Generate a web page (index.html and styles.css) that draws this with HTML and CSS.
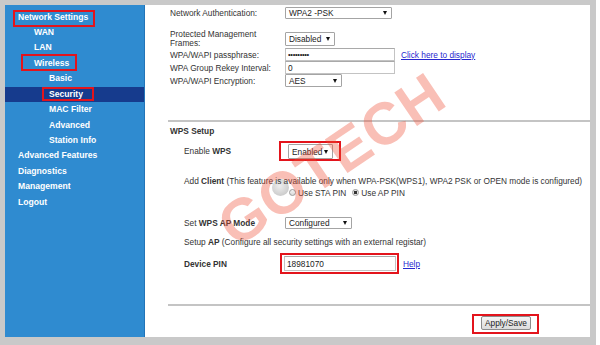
FILE: index.html
```html
<!DOCTYPE html>
<html lang="en">

<head>
    <meta charset="UTF-8">
    <meta name="viewport" content="width=device-width, initial-scale=1.0">
    <title>Wireless Security</title>
    <link rel="stylesheet" href="styles.css">
</head>

<body>
    <div class="frame">
        <nav class="sidebar">
            <div class="item lvl0"><span class="hl hl-net">Network Settings</span></div>
            <div class="item lvl1">WAN</div>
            <div class="item lvl1">LAN</div>
            <div class="item lvl1"><span class="hl hl-wl">Wireless</span></div>
            <div class="item lvl2">Basic</div>
            <div class="item lvl2 active"><span class="hl hl-sec">Security</span></div>
            <div class="item lvl2">MAC Filter</div>
            <div class="item lvl2">Advanced</div>
            <div class="item lvl2">Station Info</div>
            <div class="item lvl0">Advanced Features</div>
            <div class="item lvl0">Diagnostics</div>
            <div class="item lvl0">Management</div>
            <div class="item lvl0">Logout</div>
        </nav>

        <main class="content">
            <div class="row row-auth">
                <div class="label">Network Authentication:</div>
                <span class="select sel-auth">WPA2 -PSK<i class="caret"></i></span>
            </div>
            <div class="row row-pmf">
                <div class="label label-wrap">Protected Management Frames:</div>
                <span class="select sel-pmf">Disabled<i class="caret"></i></span>
            </div>
            <div class="row row-small">
                <div class="label">WPA/WAPI passphrase:</div>
                <span class="input inp-wide"><span class="dots">•••••••••</span></span>
                <a class="link link-display" href="#">Click here to display</a>
            </div>
            <div class="row row-small">
                <div class="label">WPA Group Rekey Interval:</div>
                <span class="input inp-wide">0</span>
            </div>
            <div class="row row-small">
                <div class="label">WPA/WAPI Encryption:</div>
                <span class="select sel-enc">AES<i class="caret"></i></span>
            </div>

            <div class="sep sep-top"></div>

            <div class="section-title">WPS Setup</div>

            <div class="row wps-row row-enable">
                <div class="label wps-label">Enable <b>WPS</b></div>
                <span class="redbox box-enable">
                    <span class="select sel-enable">Enabled<i class="caret"></i></span>
                </span>
            </div>

            <div class="note note-client">Add <b>Client</b> (This feature is available only when WPA-PSK(WPS1), WPA2 PSK or OPEN mode is configured)</div>
            <div class="radios">
                <span class="radio"></span><span class="radio-text">Use STA PIN</span>
                <span class="radio checked"></span><span class="radio-text">Use AP PIN</span>
            </div>

            <div class="row wps-row row-mode">
                <div class="label wps-label">Set <b>WPS AP Mode</b></div>
                <span class="select sel-mode">Configured<i class="caret"></i></span>
            </div>

            <div class="note note-setup">Setup <b>AP</b> (Configure all security settings with an external registar)</div>

            <div class="row wps-row row-pin">
                <div class="label wps-label"><b>Device PIN</b></div>
                <span class="redbox box-pin">
                    <span class="input inp-pin">18981070</span>
                </span>
                <a class="link link-help" href="#">Help</a>
            </div>

            <div class="sep sep-bottom"></div>

            <div class="actions">
                <span class="redbox box-apply">
                    <button class="btn" type="button">Apply/Save</button>
                </span>
            </div>

            <div class="watermark">GOTECH</div>
            <div class="spinner"></div>
        </main>
    </div>
</body>

</html>
```

FILE: styles.css
```css
html,
body {
    margin: 0;
    padding: 0;
    overflow: hidden;
}

body {
    background: #fff;
    font-family: "Liberation Sans", Arial, sans-serif;
}

.frame {
    display: flex;
    width: 585px;
    height: 332px;
    border-style: solid;
    border-color: #c9c9c9;
    border-width: 5px 6px 8px 5px;
}

/* left menu */
.sidebar {
    width: 139px;
    flex-shrink: 0;
    padding-top: 4.5px;
    background: #2f8bd0;
    border-right: 1px solid #2274b8;
}

.item {
    height: 15.45px;
    line-height: 15.45px;
    font-size: 8.6px;
    font-weight: bold;
    color: #fff;
    white-space: nowrap;
}

.lvl0 {
    padding-left: 13px;
}

.lvl1 {
    padding-left: 29px;
}

.lvl2 {
    padding-left: 44px;
}

.item.active {
    background: #163b8d;
}

.hl {
    position: relative;
}

.hl::after {
    content: "";
    position: absolute;
    border: 2px solid #e3141c;
}

.hl-net::after {
    left: -5px;
    right: -7px;
    top: -2px;
    bottom: -5px;
}

.hl-wl::after {
    left: -13px;
    right: -8px;
    top: -4px;
    bottom: -3px;
}

.hl-sec::after {
    left: -7px;
    right: -11px;
    top: -2px;
    bottom: -2px;
}

/* main panel */
.content {
    position: relative;
    flex: 1;
    padding-left: 25px;
    background: #fff;
    font-size: 8.3px;
    color: #333;
    overflow: hidden;
}

.row {
    display: flex;
    align-items: center;
}

.label {
    width: 115px;
    flex-shrink: 0;
    white-space: nowrap;
}

.label-wrap {
    box-sizing: border-box;
    padding-right: 3px;
    white-space: normal;
    line-height: 9px;
}

.row-auth {
    height: 12px;
    margin-top: 2px;
}

.row-pmf {
    height: 19px;
    margin-top: 10px;
}

.row-small {
    height: 13px;
}

.select {
    display: inline-flex;
    align-items: center;
    justify-content: space-between;
    box-sizing: border-box;
    padding: 0 4px 0 3px;
    border: 1px solid #a4a4a4;
    border-radius: 1px;
    background: #fff;
    color: #222;
    font-size: 8.3px;
}

.caret {
    width: 0;
    height: 0;
    border-left: 2.5px solid transparent;
    border-right: 2.5px solid transparent;
    border-top: 4px solid #111;
}

.sel-auth {
    width: 107px;
    height: 12px;
}

.sel-pmf {
    width: 50px;
    height: 14px;
}

.sel-enc {
    width: 57px;
    height: 13px;
}

.sel-enable {
    width: 45px;
    height: 15px;
}

.sel-mode {
    width: 67px;
    height: 12px;
}

.input {
    display: inline-flex;
    align-items: center;
    box-sizing: border-box;
    padding-left: 2px;
    border: 1px solid #c3c3c3;
    border-top-color: #a9a9a9;
    background: #fff;
    color: #222;
}

.inp-wide {
    width: 110px;
    height: 13px;
}

.inp-pin {
    width: 112px;
    height: 15px;
}

.dots {
    font-size: 7.5px;
    letter-spacing: -0.3px;
}

.link {
    color: #2727cf;
    text-decoration: underline;
}

.link-display {
    margin-left: 6px;
}

.link-help {
    margin-left: 4px;
}

.sep {
    margin-left: -2px;
    border-top: 2px solid #c4c4c4;
}

.sep-top {
    margin-top: 33px;
}

.sep-bottom {
    margin-top: 30px;
}

.section-title {
    margin-top: 3px;
    line-height: 12px;
    font-weight: bold;
}

.wps-row {
    padding-left: 14px;
}

.wps-label {
    width: 101px;
}

.row-enable {
    height: 20px;
    margin-top: 4px;
}

.redbox {
    display: inline-flex;
    align-items: flex-start;
    border: 2px solid #e3141c;
}

.box-enable {
    margin-left: -6px;
    padding: 1px 6px 0 7px;
}

.note {
    padding-left: 14px;
    line-height: 11px;
    white-space: nowrap;
}

.note-client {
    margin-top: 15px;
}

.radios {
    display: flex;
    align-items: center;
    height: 11px;
    padding-left: 119px;
}

.radio {
    width: 7px;
    height: 7px;
    box-sizing: border-box;
    border: 1px solid #9a9a9a;
    border-radius: 50%;
    background: linear-gradient(#f2f2f2, #d9d9d9);
    margin-right: 2px;
}

.radio.checked {
    background: radial-gradient(circle, #333 0 1.6px, #e6e6e6 2px);
    margin-left: 6px;
}

.row-mode {
    height: 13px;
    margin-top: 18px;
}

.note-setup {
    margin-top: 8px;
}

.row-pin {
    height: 21px;
    margin-top: 5px;
}

.box-pin {
    margin-left: -5px;
    padding: 1px 1px 1px 2px;
}

.actions {
    margin-top: 8px;
    padding-left: 302px;
}

.box-apply {
    padding: 0 6px 2px 7px;
}

.btn {
    width: 50px;
    height: 14px;
    padding: 0;
    border: 1px solid #8c8c8c;
    border-radius: 2px;
    background: linear-gradient(#f5f5f5, #dcdcdc);
    color: #222;
    font-family: "Liberation Sans", Arial, sans-serif;
    font-size: 8.3px;
}

/* GOTECH watermark over the form */
.watermark {
    position: absolute;
    left: 187px;
    top: 155px;
    transform: translate(-50%, -50%) rotate(-34deg);
    font-size: 59px;
    font-weight: bold;
    line-height: 1;
    letter-spacing: 1px;
    color: rgba(238, 78, 52, 0.36);
    white-space: nowrap;
    pointer-events: none;
}

.spinner {
    position: absolute;
    left: 127px;
    top: 174px;
    width: 17px;
    height: 17px;
    border-radius: 50%;
    background: radial-gradient(circle at 45% 40%, rgba(120, 120, 120, 0.12), rgba(90, 90, 90, 0.3) 70%, rgba(90, 90, 90, 0) 100%);
    pointer-events: none;
}
```
